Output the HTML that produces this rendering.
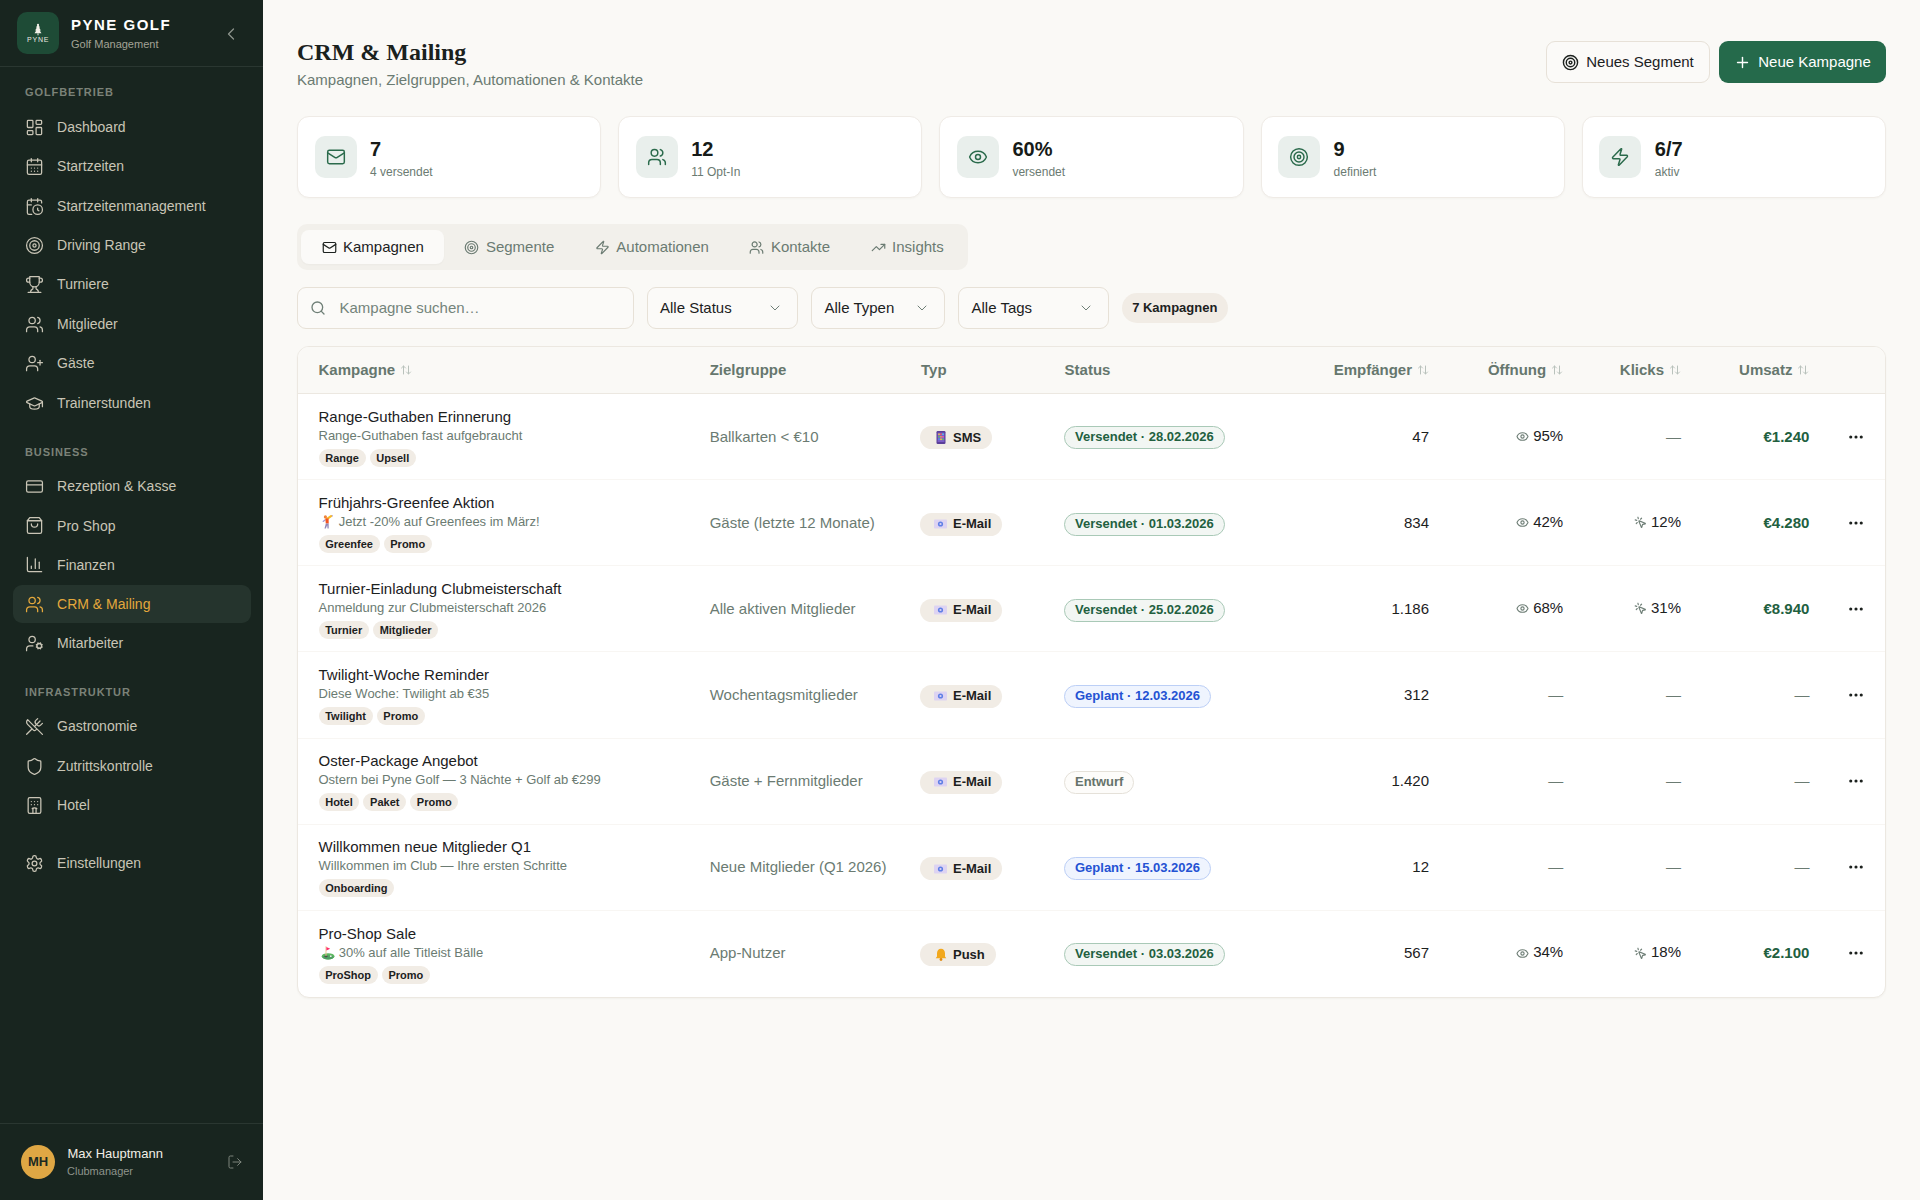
<!DOCTYPE html>
<html lang="de"><head><meta charset="utf-8"><title>CRM &amp; Mailing</title>
<style>
*{box-sizing:border-box;margin:0;padding:0}
html,body{width:1920px;height:1200px;overflow:hidden}
body{background:#faf9f6;font-family:"Liberation Sans",sans-serif;color:#1c211e;position:relative}
svg{display:block;flex:none}
#side{position:absolute;left:0;top:0;width:263px;height:1200px;background:#18251f}
.logo{position:absolute;left:17px;top:12px;width:42px;height:42px;border-radius:10px;background:#1e4b36}
.brand{position:absolute;left:71px;top:14.8px;font-size:15px;line-height:20px;font-weight:700;letter-spacing:1.5px;color:#ffffff;white-space:nowrap}
.brandsub{position:absolute;left:71px;top:37.2px;font-size:11px;line-height:14px;color:#a3a396;white-space:nowrap}
.collapse{position:absolute;left:220.6px;top:23.6px;width:20px;height:20px}
.sdiv{position:absolute;left:0;width:263px;height:1px;background:#2a3731}
.slabel{position:absolute;left:25px;font-size:11px;line-height:14px;font-weight:700;letter-spacing:0.9px;color:#7b8278;white-space:nowrap}
.nav{position:absolute;left:13px;width:238px;height:37.5px;border-radius:9px;display:flex;align-items:center;padding-left:11.5px;color:#c9c5b6;font-size:14px;line-height:20px;white-space:nowrap}
.nav svg{margin:0 13.1px 0 0.5px}
.nav.active{background:#25342d;color:#e4a83c}
.avatar{position:absolute;left:21px;top:1145px;width:34px;height:34px;border-radius:50%;background:#dfa744;color:#1b2a22;font-size:13px;font-weight:700;line-height:34px;text-align:center}
.uname{position:absolute;left:67.5px;top:1144.8px;font-size:13px;line-height:18px;font-weight:400;color:#f1eee6;white-space:nowrap}
.urole{position:absolute;left:67px;top:1164.2px;font-size:11px;line-height:14px;color:#8e948b;white-space:nowrap}
.logout{position:absolute;left:226.8px;top:1154.3px;width:16px;height:16px}
.h1{position:absolute;left:297px;top:36.9px;font-family:"Liberation Serif",serif;font-weight:700;font-size:24px;line-height:30px;color:#1a211d;white-space:nowrap}
.sub{position:absolute;left:297px;top:69.9px;font-size:15px;line-height:20px;color:#6b7b72;white-space:nowrap}
.btn{position:absolute;top:41px;height:42px;border-radius:9px;display:flex;align-items:center;justify-content:center;font-size:15px;line-height:20px;white-space:nowrap}
.btn svg{margin-right:7px}
.b1{left:1546px;width:164px;background:#fbfaf8;border:1px solid #e7e1d8;color:#1c211e}
.b2{left:1719px;width:167px;background:#256a4b;color:#ffffff}
.stats{position:absolute;left:297px;top:116px;width:1589px;height:82px;display:grid;grid-template-columns:repeat(5,1fr);gap:17px}
.stat{position:relative;background:#ffffff;border:1px solid #efebe6;border-radius:12px;box-shadow:0 1px 2px rgba(60,50,30,0.03)}
.sico{position:absolute;left:16.5px;top:19px;width:42px;height:42px;border-radius:10px;background:#e9efec;color:#2a6a4b;display:flex;align-items:center;justify-content:center}
.sval{position:absolute;left:72px;top:18.1px;font-size:20px;line-height:28px;font-weight:700;color:#161b18;white-space:nowrap}
.slab{position:absolute;left:72px;top:46.6px;font-size:12px;line-height:16px;color:#6b7b72;white-space:nowrap}
.tabs{position:absolute;left:297px;top:224px;height:46px;padding:6px 4px;border-radius:10px;background:#f2f0eb;display:flex}
.tab{height:34px;padding:0 20px;border-radius:8px;display:flex;align-items:center;font-size:15px;line-height:20px;color:#6b7b72;white-space:nowrap}
.tab svg{margin:0 6.5px 0 0.5px}
.tab.on{background:#fbfaf8;color:#1c211e;box-shadow:0 1px 2px rgba(0,0,0,0.03)}
.search{position:absolute;left:297px;top:287px;width:336.5px;height:41.5px;border:1px solid #e7e1d7;border-radius:9px;background:#fbfaf8;display:flex;align-items:center;padding-left:11.5px;font-size:15px;line-height:20px;color:#74847b;white-space:nowrap}
.search svg{margin-right:14px}
.sel{position:absolute;top:287px;height:41.5px;border:1px solid #e7e1d7;border-radius:9px;background:#fbfaf8;display:flex;align-items:center;padding-left:12.5px;font-size:15px;line-height:20px;color:#1c211e;white-space:nowrap}
.sel svg{position:absolute;right:13.5px;top:12px}
.count{position:absolute;left:1121.5px;top:292.7px;width:106.5px;height:30.2px;border-radius:15px;background:#f1ece5;font-size:13px;line-height:30.2px;font-weight:700;text-align:center;color:#1c211e;white-space:nowrap}
.table{position:absolute;left:297px;top:346px;width:1589px;height:652px;background:#ffffff;border:1px solid #ece8e1;border-radius:12px;overflow:hidden;box-shadow:0 1px 2px rgba(60,45,20,0.04)}
.thead{position:relative;height:47px;background:#faf9f6;border-bottom:1px solid #ece8e1}
.thead>div{position:absolute;top:13px;font-size:15px;line-height:20px;font-weight:700;color:#66776e;white-space:nowrap;display:flex;align-items:center}
.row{position:relative;height:86.14px;border-bottom:1px solid #f8f6f3}
.row:last-child{border-bottom:none}
.c1{left:20.5px}
.c2{left:411.7px}
.c3{left:622px}
.c4{left:766px}
.c5{right:456px}
.c6{right:321.8px}
.c7{right:204px}
.c8{right:75.6px}
.thead .c3{left:623px}
.thead .c4{left:766.6px}
.row>div{position:absolute;white-space:nowrap}
.row .c1{top:12.8px}
.rt{font-size:15px;line-height:20px;color:#1c211e}
.rs{font-size:13px;line-height:18px;color:#6b7b72}
.emo{display:inline-block;width:16.6px;height:16px;vertical-align:-3.5px}
.emo svg{margin:0.8px 0 0 1.2px}
.tags{display:flex;margin-top:4px}
.tag{height:18px;padding:0 6.7px;border-radius:9px;background:#f1ece5;font-size:11px;line-height:18px;font-weight:700;color:#1c211e;margin-right:4px}
.row .c2,.row .c5,.row .c6,.row .c7,.row .c8,.row .c3,.row .c4,.row .c9{top:0;height:85.14px;display:flex;align-items:center;font-size:15px;line-height:20px}
.row .c2{color:#6b7b72}
.row .c5{color:#1c211e}
.met{display:flex;align-items:center;color:#1c211e}
.met svg{margin-right:4px}
.met span{position:relative;top:-1px}
.dash{color:#6b7b72}
.ums{font-weight:700;color:#22603f}

.typ{display:flex;align-items:center;height:23px;position:relative;top:1.35px;padding:0 11px 0 12px;border-radius:12px;background:#f1ece5;font-size:13px;line-height:22px;font-weight:700;color:#1c211e}
.typ .em{margin-right:4px}
.typ .em{width:17px;display:flex;justify-content:center}
.st{display:inline-block;position:relative;top:1.35px;height:23px;padding:0 10px;border-radius:12px;font-size:13px;line-height:20px;font-weight:700;border:1px solid}
.st-v{background:#f2f6f3;border-color:#a9c9b7;color:#22603f}
.st-g{background:#eff4fe;border-color:#bccff6;color:#2452d3}
.st-e{background:#fdfcfa;border-color:#e5e1d9;color:#66736b}
.c9{right:20.5px}

</style></head><body>
<div id="side">
  <div class="logo"><svg width="42" height="42" viewBox="0 0 42 42"><g fill="#f1efe7"><circle cx="21" cy="12.9" r="1.1"/><path d="M21 12.4 L18.9 15.6 H19.9 L18.1 18.4 H19.3 L17.5 21.3 H24.5 L22.7 18.4 H23.9 L22.1 15.6 H23.1z"/><rect x="20.5" y="21.3" width="1" height="2"/></g><text x="21.2" y="30" text-anchor="middle" font-family="Liberation Sans" font-weight="400" font-size="7" letter-spacing="0.8" fill="#eae8e0">PYNE</text></svg></div>
  <div class="brand">PYNE GOLF</div>
  <div class="brandsub">Golf Management</div>
  <div class="collapse"><svg width="20" height="20" viewBox="0 0 24 24" fill="none" stroke="#8d948c" stroke-width="1.5" stroke-linecap="round" stroke-linejoin="round" style=""><path d="m15 18-6-6 6-6"/></svg></div>
  <div class="sdiv" style="top:66px"></div>
  <div class="slabel" style="top:85.20px">GOLFBETRIEB</div><div class="nav" style="top:108.40px"><svg width="19" height="19" viewBox="0 0 24 24" fill="none" stroke="currentColor" stroke-width="1.6" stroke-linecap="round" stroke-linejoin="round" style=""><rect x="3" y="3" width="7" height="9" rx="1"/><rect x="14" y="3" width="7" height="5" rx="1"/><rect x="14" y="12" width="7" height="9" rx="1"/><rect x="3" y="16" width="7" height="5" rx="1"/></svg><span>Dashboard</span></div><div class="nav" style="top:147.40px"><svg width="19" height="19" viewBox="0 0 24 24" fill="none" stroke="currentColor" stroke-width="1.6" stroke-linecap="round" stroke-linejoin="round" style=""><path d="M8 2v4"/><path d="M16 2v4"/><path d="M3 10h18"/><path d="M8 14h.01"/><path d="M12 14h.01"/><path d="M16 14h.01"/><path d="M8 18h.01"/><path d="M12 18h.01"/><path d="M16 18h.01"/><rect x="3" y="4" width="18" height="18" rx="2"/></svg><span>Startzeiten</span></div><div class="nav" style="top:187.40px"><svg width="19" height="19" viewBox="0 0 24 24" fill="none" stroke="currentColor" stroke-width="1.6" stroke-linecap="round" stroke-linejoin="round" style=""><path d="M21 7.5V6a2 2 0 0 0-2-2H5a2 2 0 0 0-2 2v14a2 2 0 0 0 2 2h3.5"/><path d="M16 2v4"/><path d="M8 2v4"/><path d="M3 10h5"/><path d="M17.5 17.5 16 16.3V14"/><circle cx="16" cy="16" r="6"/></svg><span>Startzeitenmanagement</span></div><div class="nav" style="top:226.40px"><svg width="19" height="19" viewBox="0 0 24 24" fill="none" stroke="currentColor" stroke-width="1.6" stroke-linecap="round" stroke-linejoin="round" style=""><circle cx="12" cy="12" r="10"/><circle cx="12" cy="12" r="6"/><circle cx="12" cy="12" r="2"/></svg><span>Driving Range</span></div><div class="nav" style="top:265.40px"><svg width="19" height="19" viewBox="0 0 24 24" fill="none" stroke="currentColor" stroke-width="1.6" stroke-linecap="round" stroke-linejoin="round" style=""><path d="M6 9H4.5a2.5 2.5 0 0 1 0-5H6"/><path d="M18 9h1.5a2.5 2.5 0 0 0 0-5H18"/><path d="M4 22h16"/><path d="M10 14.66V17c0 .55-.47.98-.97 1.21C7.85 18.75 7 20.24 7 22"/><path d="M14 14.66V17c0 .55.47.98.97 1.21C16.15 18.75 17 20.24 17 22"/><path d="M18 2H6v7a6 6 0 0 0 12 0V2Z"/></svg><span>Turniere</span></div><div class="nav" style="top:305.40px"><svg width="19" height="19" viewBox="0 0 24 24" fill="none" stroke="currentColor" stroke-width="1.6" stroke-linecap="round" stroke-linejoin="round" style=""><path d="M16 21v-2a4 4 0 0 0-4-4H6a4 4 0 0 0-4 4v2"/><path d="M22 21v-2a4 4 0 0 0-3-3.87"/><path d="M16 3.13a4 4 0 0 1 0 7.75"/><circle cx="9" cy="7" r="4"/></svg><span>Mitglieder</span></div><div class="nav" style="top:344.40px"><svg width="19" height="19" viewBox="0 0 24 24" fill="none" stroke="currentColor" stroke-width="1.6" stroke-linecap="round" stroke-linejoin="round" style=""><path d="M16 21v-2a4 4 0 0 0-4-4H6a4 4 0 0 0-4 4v2"/><path d="M19 8v6"/><path d="M22 11h-6"/><circle cx="9" cy="7" r="4"/></svg><span>Gäste</span></div><div class="nav" style="top:384.40px"><svg width="19" height="19" viewBox="0 0 24 24" fill="none" stroke="currentColor" stroke-width="1.6" stroke-linecap="round" stroke-linejoin="round" style=""><path d="M21.42 10.922a1 1 0 0 0-.019-1.838L12.83 5.18a2 2 0 0 0-1.66 0L2.6 9.08a1 1 0 0 0 0 1.832l8.57 3.908a2 2 0 0 0 1.66 0z"/><path d="M22 10v6"/><path d="M6 12.5V16a6 3 0 0 0 12 0v-3.5"/></svg><span>Trainerstunden</span></div><div class="slabel" style="top:444.70px">BUSINESS</div><div class="nav" style="top:467.40px"><svg width="19" height="19" viewBox="0 0 24 24" fill="none" stroke="currentColor" stroke-width="1.6" stroke-linecap="round" stroke-linejoin="round" style=""><rect x="2" y="5" width="20" height="14" rx="2"/><path d="M2 10h20"/></svg><span>Rezeption &amp; Kasse</span></div><div class="nav" style="top:506.90px"><svg width="19" height="19" viewBox="0 0 24 24" fill="none" stroke="currentColor" stroke-width="1.6" stroke-linecap="round" stroke-linejoin="round" style=""><path d="M6 2 3 6v14a2 2 0 0 0 2 2h14a2 2 0 0 0 2-2V6l-3-4Z"/><path d="M3 6h18"/><path d="M16 10a4 4 0 0 1-8 0"/></svg><span>Pro Shop</span></div><div class="nav" style="top:545.90px"><svg width="19" height="19" viewBox="0 0 24 24" fill="none" stroke="currentColor" stroke-width="1.6" stroke-linecap="round" stroke-linejoin="round" style=""><path d="M3 3v16a2 2 0 0 0 2 2h16"/><path d="M18 17V9"/><path d="M13 17V5"/><path d="M8 17v-3"/></svg><span>Finanzen</span></div><div class="nav active" style="top:585.40px"><svg width="19" height="19" viewBox="0 0 24 24" fill="none" stroke="currentColor" stroke-width="1.6" stroke-linecap="round" stroke-linejoin="round" style=""><path d="M16 21v-2a4 4 0 0 0-4-4H6a4 4 0 0 0-4 4v2"/><path d="M22 21v-2a4 4 0 0 0-3-3.87"/><path d="M16 3.13a4 4 0 0 1 0 7.75"/><circle cx="9" cy="7" r="4"/></svg><span>CRM &amp; Mailing</span></div><div class="nav" style="top:624.40px"><svg width="19" height="19" viewBox="0 0 24 24" fill="none" stroke="currentColor" stroke-width="1.6" stroke-linecap="round" stroke-linejoin="round" style=""><path d="M10 15H6a4 4 0 0 0-4 4v2"/><path d="m14.305 16.53.923-.382"/><path d="m15.228 13.852-.923-.383"/><path d="m16.852 12.228-.383-.923"/><path d="m16.852 17.772-.383.924"/><path d="m19.148 12.228.383-.923"/><path d="m19.53 18.696-.382-.924"/><path d="m20.772 13.852.924-.383"/><path d="m20.772 16.148.924.383"/><circle cx="18" cy="15" r="3"/><circle cx="9" cy="7" r="4"/></svg><span>Mitarbeiter</span></div><div class="slabel" style="top:685.20px">INFRASTRUKTUR</div><div class="nav" style="top:707.40px"><svg width="19" height="19" viewBox="0 0 24 24" fill="none" stroke="currentColor" stroke-width="1.6" stroke-linecap="round" stroke-linejoin="round" style=""><path d="m16 2-2.3 2.3a3 3 0 0 0 0 4.2l1.8 1.8a3 3 0 0 0 4.2 0L22 8"/><path d="M15 15 3.3 3.3a4.2 4.2 0 0 0 0 6l7.3 7.3c.7.7 2 .7 2.8 0L15 15Zm0 0 7 7"/><path d="m2.1 21.8 6.4-6.3"/><path d="m19 5-7 7"/></svg><span>Gastronomie</span></div><div class="nav" style="top:747.40px"><svg width="19" height="19" viewBox="0 0 24 24" fill="none" stroke="currentColor" stroke-width="1.6" stroke-linecap="round" stroke-linejoin="round" style=""><path d="M20 13c0 5-3.5 7.5-7.66 8.95a1 1 0 0 1-.67-.01C7.5 20.5 4 18 4 13V6a1 1 0 0 1 1-1c2 0 4.5-1.2 6.24-2.72a1.17 1.17 0 0 1 1.52 0C14.51 3.81 17 5 19 5a1 1 0 0 1 1 1z"/></svg><span>Zutrittskontrolle</span></div><div class="nav" style="top:786.40px"><svg width="19" height="19" viewBox="0 0 24 24" fill="none" stroke="currentColor" stroke-width="1.6" stroke-linecap="round" stroke-linejoin="round" style=""><path d="M10 22v-6.57"/><path d="M12 11h.01"/><path d="M12 7h.01"/><path d="M14 15.43V22"/><path d="M15 16a5 5 0 0 0-6 0"/><path d="M16 11h.01"/><path d="M16 7h.01"/><path d="M8 11h.01"/><path d="M8 7h.01"/><rect x="4" y="2" width="16" height="20" rx="2"/></svg><span>Hotel</span></div><div class="nav" style="top:844.40px"><svg width="19" height="19" viewBox="0 0 24 24" fill="none" stroke="currentColor" stroke-width="1.6" stroke-linecap="round" stroke-linejoin="round" style=""><path d="M12.22 2h-.44a2 2 0 0 0-2 2v.18a2 2 0 0 1-1 1.73l-.43.25a2 2 0 0 1-2 0l-.15-.08a2 2 0 0 0-2.73.73l-.22.38a2 2 0 0 0 .73 2.73l.15.1a2 2 0 0 1 1 1.72v.51a2 2 0 0 1-1 1.74l-.15.09a2 2 0 0 0-.73 2.73l.22.38a2 2 0 0 0 2.73.73l.15-.08a2 2 0 0 1 2 0l.43.25a2 2 0 0 1 1 1.73V20a2 2 0 0 0 2 2h.44a2 2 0 0 0 2-2v-.18a2 2 0 0 1 1-1.73l.43-.25a2 2 0 0 1 2 0l.15.08a2 2 0 0 0 2.73-.73l.22-.39a2 2 0 0 0-.73-2.73l-.15-.08a2 2 0 0 1-1-1.74v-.5a2 2 0 0 1 1-1.74l.15-.09a2 2 0 0 0 .73-2.73l-.22-.38a2 2 0 0 0-2.73-.73l-.15.08a2 2 0 0 1-2 0l-.43-.25a2 2 0 0 1-1-1.73V4a2 2 0 0 0-2-2z"/><circle cx="12" cy="12" r="3"/></svg><span>Einstellungen</span></div>
  <div class="sdiv" style="top:1123px"></div>
  <div class="avatar">MH</div>
  <div class="uname">Max Hauptmann</div>
  <div class="urole">Clubmanager</div>
  <div class="logout"><svg width="16" height="16" viewBox="0 0 24 24" fill="none" stroke="#7d857d" stroke-width="1.5" stroke-linecap="round" stroke-linejoin="round" style=""><path d="M9 21H5a2 2 0 0 1-2-2V5a2 2 0 0 1 2-2h4"/><path d="m16 17 5-5-5-5"/><path d="M21 12H9"/></svg></div>
</div>
<div id="main">
  <div class="h1">CRM &amp; Mailing</div>
  <div class="sub">Kampagnen, Zielgruppen, Automationen &amp; Kontakte</div>
  <div class="btn b1"><svg width="17" height="17" viewBox="0 0 24 24" fill="none" stroke="#1c211e" stroke-width="2" stroke-linecap="round" stroke-linejoin="round" style=""><circle cx="12" cy="12" r="10"/><circle cx="12" cy="12" r="6"/><circle cx="12" cy="12" r="2"/></svg><span>Neues Segment</span></div>
  <div class="btn b2"><svg width="17" height="17" viewBox="0 0 24 24" fill="none" stroke="#ffffff" stroke-width="2" stroke-linecap="round" stroke-linejoin="round" style=""><path d="M5 12h14"/><path d="M12 5v14"/></svg><span>Neue Kampagne</span></div>
  <div class="stats"><div class="stat"><div class="sico"><svg width="20" height="20" viewBox="0 0 24 24" fill="none" stroke="currentColor" stroke-width="1.75" stroke-linecap="round" stroke-linejoin="round" style=""><rect x="2" y="4" width="20" height="16" rx="2"/><path d="m22 7-8.97 5.7a1.94 1.94 0 0 1-2.06 0L2 7"/></svg></div><div class="stxt"><div class="sval">7</div><div class="slab">4 versendet</div></div></div><div class="stat"><div class="sico"><svg width="20" height="20" viewBox="0 0 24 24" fill="none" stroke="currentColor" stroke-width="1.75" stroke-linecap="round" stroke-linejoin="round" style=""><path d="M16 21v-2a4 4 0 0 0-4-4H6a4 4 0 0 0-4 4v2"/><path d="M22 21v-2a4 4 0 0 0-3-3.87"/><path d="M16 3.13a4 4 0 0 1 0 7.75"/><circle cx="9" cy="7" r="4"/></svg></div><div class="stxt"><div class="sval">12</div><div class="slab">11 Opt-In</div></div></div><div class="stat"><div class="sico"><svg width="20" height="20" viewBox="0 0 24 24" fill="none" stroke="currentColor" stroke-width="1.75" stroke-linecap="round" stroke-linejoin="round" style=""><path d="M2.062 12.348a1 1 0 0 1 0-.696 10.75 10.75 0 0 1 19.876 0 1 1 0 0 1 0 .696 10.75 10.75 0 0 1-19.876 0"/><circle cx="12" cy="12" r="3"/></svg></div><div class="stxt"><div class="sval">60%</div><div class="slab">versendet</div></div></div><div class="stat"><div class="sico"><svg width="20" height="20" viewBox="0 0 24 24" fill="none" stroke="currentColor" stroke-width="1.75" stroke-linecap="round" stroke-linejoin="round" style=""><circle cx="12" cy="12" r="10"/><circle cx="12" cy="12" r="6"/><circle cx="12" cy="12" r="2"/></svg></div><div class="stxt"><div class="sval">9</div><div class="slab">definiert</div></div></div><div class="stat"><div class="sico"><svg width="20" height="20" viewBox="0 0 24 24" fill="none" stroke="currentColor" stroke-width="1.75" stroke-linecap="round" stroke-linejoin="round" style=""><path d="M4 14a1 1 0 0 1-.78-1.63l9.9-10.2a.5.5 0 0 1 .86.46l-1.92 6.02A1 1 0 0 0 13 10h7a1 1 0 0 1 .78 1.63l-9.9 10.2a.5.5 0 0 1-.86-.46l1.92-6.02A1 1 0 0 0 11 14z"/></svg></div><div class="stxt"><div class="sval">6/7</div><div class="slab">aktiv</div></div></div></div>
  <div class="tabs"><div class="tab on"><svg width="15" height="15" viewBox="0 0 24 24" fill="none" stroke="currentColor" stroke-width="1.9" stroke-linecap="round" stroke-linejoin="round" style=""><rect x="2" y="4" width="20" height="16" rx="2"/><path d="m22 7-8.97 5.7a1.94 1.94 0 0 1-2.06 0L2 7"/></svg><span>Kampagnen</span></div><div class="tab"><svg width="15" height="15" viewBox="0 0 24 24" fill="none" stroke="currentColor" stroke-width="1.9" stroke-linecap="round" stroke-linejoin="round" style=""><circle cx="12" cy="12" r="10"/><circle cx="12" cy="12" r="6"/><circle cx="12" cy="12" r="2"/></svg><span>Segmente</span></div><div class="tab"><svg width="15" height="15" viewBox="0 0 24 24" fill="none" stroke="currentColor" stroke-width="1.9" stroke-linecap="round" stroke-linejoin="round" style=""><path d="M4 14a1 1 0 0 1-.78-1.63l9.9-10.2a.5.5 0 0 1 .86.46l-1.92 6.02A1 1 0 0 0 13 10h7a1 1 0 0 1 .78 1.63l-9.9 10.2a.5.5 0 0 1-.86-.46l1.92-6.02A1 1 0 0 0 11 14z"/></svg><span>Automationen</span></div><div class="tab"><svg width="15" height="15" viewBox="0 0 24 24" fill="none" stroke="currentColor" stroke-width="1.9" stroke-linecap="round" stroke-linejoin="round" style=""><path d="M16 21v-2a4 4 0 0 0-4-4H6a4 4 0 0 0-4 4v2"/><path d="M22 21v-2a4 4 0 0 0-3-3.87"/><path d="M16 3.13a4 4 0 0 1 0 7.75"/><circle cx="9" cy="7" r="4"/></svg><span>Kontakte</span></div><div class="tab"><svg width="15" height="15" viewBox="0 0 24 24" fill="none" stroke="currentColor" stroke-width="1.9" stroke-linecap="round" stroke-linejoin="round" style=""><path d="M22 7 13.5 15.5 8.5 10.5 2 17"/><path d="M16 7h6v6"/></svg><span>Insights</span></div></div>
  <div class="search"><svg width="16" height="16" viewBox="0 0 24 24" fill="none" stroke="#6f7f77" stroke-width="2" stroke-linecap="round" stroke-linejoin="round" style=""><circle cx="11" cy="11" r="8"/><path d="m21 21-4.3-4.3"/></svg><span>Kampagne suchen…</span></div>
  <div class="sel" style="left:646.5px;width:151px"><span>Alle Status</span><svg width="16" height="16" viewBox="0 0 24 24" fill="none" stroke="#6f7f77" stroke-width="1.5" stroke-linecap="round" stroke-linejoin="round" style=""><path d="m6 9 6 6 6-6"/></svg></div>
  <div class="sel" style="left:811px;width:133.5px"><span>Alle Typen</span><svg width="16" height="16" viewBox="0 0 24 24" fill="none" stroke="#6f7f77" stroke-width="1.5" stroke-linecap="round" stroke-linejoin="round" style=""><path d="m6 9 6 6 6-6"/></svg></div>
  <div class="sel" style="left:958px;width:150.5px"><span>Alle Tags</span><svg width="16" height="16" viewBox="0 0 24 24" fill="none" stroke="#6f7f77" stroke-width="1.5" stroke-linecap="round" stroke-linejoin="round" style=""><path d="m6 9 6 6 6-6"/></svg></div>
  <div class="count">7 Kampagnen</div>
  <div class="table">
    <div class="thead">
      <div class="c1">Kampagne<svg width="12" height="12" viewBox="0 0 24 24" fill="none" stroke="#b9c2bc" stroke-width="2" stroke-linecap="round" stroke-linejoin="round" style="margin-left:5px;vertical-align:-1px"><path d="m21 16-4 4-4-4"/><path d="M17 20V4"/><path d="m3 8 4-4 4 4"/><path d="M7 4v16"/></svg></div>
      <div class="c2">Zielgruppe</div>
      <div class="c3">Typ</div>
      <div class="c4">Status</div>
      <div class="c5">Empfänger<svg width="12" height="12" viewBox="0 0 24 24" fill="none" stroke="#b9c2bc" stroke-width="2" stroke-linecap="round" stroke-linejoin="round" style="margin-left:5px;vertical-align:-1px"><path d="m21 16-4 4-4-4"/><path d="M17 20V4"/><path d="m3 8 4-4 4 4"/><path d="M7 4v16"/></svg></div>
      <div class="c6">Öffnung<svg width="12" height="12" viewBox="0 0 24 24" fill="none" stroke="#b9c2bc" stroke-width="2" stroke-linecap="round" stroke-linejoin="round" style="margin-left:5px;vertical-align:-1px"><path d="m21 16-4 4-4-4"/><path d="M17 20V4"/><path d="m3 8 4-4 4 4"/><path d="M7 4v16"/></svg></div>
      <div class="c7">Klicks<svg width="12" height="12" viewBox="0 0 24 24" fill="none" stroke="#b9c2bc" stroke-width="2" stroke-linecap="round" stroke-linejoin="round" style="margin-left:5px;vertical-align:-1px"><path d="m21 16-4 4-4-4"/><path d="M17 20V4"/><path d="m3 8 4-4 4 4"/><path d="M7 4v16"/></svg></div>
      <div class="c8">Umsatz<svg width="12" height="12" viewBox="0 0 24 24" fill="none" stroke="#b9c2bc" stroke-width="2" stroke-linecap="round" stroke-linejoin="round" style="margin-left:5px;vertical-align:-1px"><path d="m21 16-4 4-4-4"/><path d="M17 20V4"/><path d="m3 8 4-4 4 4"/><path d="M7 4v16"/></svg></div>
    </div>
    <div class="row">
<div class="c1"><div class="rt">Range-Guthaben Erinnerung</div><div class="rs">Range-Guthaben fast aufgebraucht</div><div class="tags"><span class="tag">Range</span><span class="tag">Upsell</span></div></div>
<div class="c2">Ballkarten &lt; €10</div>
<div class="c3"><span class="typ"><span class="em"><svg width="10" height="13" viewBox="0 0 10 13"><rect x="0.5" y="0" width="9" height="13" rx="1.2" fill="#5b3f9a"/><rect x="1.6" y="1.6" width="6.8" height="9.4" fill="#7c5cc8"/><rect x="2.2" y="2.5" width="1.6" height="1.6" fill="#f5c542"/><rect x="4.2" y="2.5" width="1.6" height="1.6" fill="#ef5b5b"/><rect x="6.2" y="2.5" width="1.6" height="1.6" fill="#4ec3f0"/><rect x="2.2" y="5" width="1.6" height="1.6" fill="#58c46b"/><rect x="4.2" y="5" width="1.6" height="1.6" fill="#f59e42"/><rect x="6.2" y="5" width="1.6" height="1.6" fill="#e85bb0"/><rect x="2.2" y="7.5" width="1.6" height="1.6" fill="#4e8ef0"/><rect x="4.2" y="7.5" width="1.6" height="1.6" fill="#f5c542"/><rect x="6.2" y="7.5" width="1.6" height="1.6" fill="#58c46b"/></svg></span><span>SMS</span></span></div>
<div class="c4"><span class="st st-v">Versendet · 28.02.2026</span></div>
<div class="c5">47</div>
<div class="c6"><span class="met"><svg width="13" height="13" viewBox="0 0 24 24" fill="none" stroke="#6f7f77" stroke-width="2.1" stroke-linecap="round" stroke-linejoin="round" style=""><path d="M2.062 12.348a1 1 0 0 1 0-.696 10.75 10.75 0 0 1 19.876 0 1 1 0 0 1 0 .696 10.75 10.75 0 0 1-19.876 0"/><circle cx="12" cy="12" r="3"/></svg><span>95%</span></span></div>
<div class="c7"><span class="dash">—</span></div>
<div class="c8"><span class="ums">€1.240</span></div>
<div class="c9"><svg width="18" height="18" viewBox="0 0 24 24" fill="none" stroke="#1c211e" stroke-width="2.2" stroke-linecap="round" stroke-linejoin="round" style=""><circle cx="12" cy="12" r="1"/><circle cx="19" cy="12" r="1"/><circle cx="5" cy="12" r="1"/></svg></div>
</div><div class="row">
<div class="c1"><div class="rt">Frühjahrs-Greenfee Aktion</div><div class="rs"><span class="emo"><svg width="16.6" height="16" viewBox="0 0 16.6 16"><path d="M3.2 7.4 L5 5.9" stroke="#a99bd0" stroke-width="1.3" stroke-linecap="round"/><circle cx="12" cy="1.8" r="0.9" fill="#a99bd0"/><path d="M6.8 5.2 L11 2.2" stroke="#f7b928" stroke-width="2.2" stroke-linecap="round"/><circle cx="5.4" cy="2.9" r="1.6" fill="#f0843a"/><path d="M5.3 4.6 L8.6 4.4 L8.7 9.6 L5.8 9.6z" fill="#f4541f"/><path d="M5.8 9.5 L8.7 9.5 L8.7 14.6 L7.5 14.6 L7.2 11.2 L5.8 14.6 L4.5 14.6z" fill="#9488b8"/></svg></span> Jetzt -20% auf Greenfees im März!</div><div class="tags"><span class="tag">Greenfee</span><span class="tag">Promo</span></div></div>
<div class="c2">Gäste (letzte 12 Monate)</div>
<div class="c3"><span class="typ"><span class="em"><svg width="13" height="10" viewBox="0 0 13 10"><rect x="0" y="0.5" width="13" height="9" rx="1" fill="#ddd3f2"/><circle cx="6.5" cy="5" r="2.6" fill="#5f7fe6"/><circle cx="6.5" cy="5" r="1.1" fill="#ddd3f2"/></svg></span><span>E-Mail</span></span></div>
<div class="c4"><span class="st st-v">Versendet · 01.03.2026</span></div>
<div class="c5">834</div>
<div class="c6"><span class="met"><svg width="13" height="13" viewBox="0 0 24 24" fill="none" stroke="#6f7f77" stroke-width="2.1" stroke-linecap="round" stroke-linejoin="round" style=""><path d="M2.062 12.348a1 1 0 0 1 0-.696 10.75 10.75 0 0 1 19.876 0 1 1 0 0 1 0 .696 10.75 10.75 0 0 1-19.876 0"/><circle cx="12" cy="12" r="3"/></svg><span>42%</span></span></div>
<div class="c7"><span class="met"><svg width="13" height="13" viewBox="0 0 24 24" fill="none" stroke="#6f7f77" stroke-width="2.1" stroke-linecap="round" stroke-linejoin="round" style=""><path d="M14 4.1 12 6"/><path d="m5.1 8-2.9-.8"/><path d="m6 12-1.9 2"/><path d="M7.2 2.2 8 5.1"/><path d="M9.037 9.69a.498.498 0 0 1 .653-.653l11 4.5a.5.5 0 0 1-.074.949l-4.349 1.041a1 1 0 0 0-.74.739l-1.04 4.35a.5.5 0 0 1-.95.074z"/></svg><span>12%</span></span></div>
<div class="c8"><span class="ums">€4.280</span></div>
<div class="c9"><svg width="18" height="18" viewBox="0 0 24 24" fill="none" stroke="#1c211e" stroke-width="2.2" stroke-linecap="round" stroke-linejoin="round" style=""><circle cx="12" cy="12" r="1"/><circle cx="19" cy="12" r="1"/><circle cx="5" cy="12" r="1"/></svg></div>
</div><div class="row">
<div class="c1"><div class="rt">Turnier-Einladung Clubmeisterschaft</div><div class="rs">Anmeldung zur Clubmeisterschaft 2026</div><div class="tags"><span class="tag">Turnier</span><span class="tag">Mitglieder</span></div></div>
<div class="c2">Alle aktiven Mitglieder</div>
<div class="c3"><span class="typ"><span class="em"><svg width="13" height="10" viewBox="0 0 13 10"><rect x="0" y="0.5" width="13" height="9" rx="1" fill="#ddd3f2"/><circle cx="6.5" cy="5" r="2.6" fill="#5f7fe6"/><circle cx="6.5" cy="5" r="1.1" fill="#ddd3f2"/></svg></span><span>E-Mail</span></span></div>
<div class="c4"><span class="st st-v">Versendet · 25.02.2026</span></div>
<div class="c5">1.186</div>
<div class="c6"><span class="met"><svg width="13" height="13" viewBox="0 0 24 24" fill="none" stroke="#6f7f77" stroke-width="2.1" stroke-linecap="round" stroke-linejoin="round" style=""><path d="M2.062 12.348a1 1 0 0 1 0-.696 10.75 10.75 0 0 1 19.876 0 1 1 0 0 1 0 .696 10.75 10.75 0 0 1-19.876 0"/><circle cx="12" cy="12" r="3"/></svg><span>68%</span></span></div>
<div class="c7"><span class="met"><svg width="13" height="13" viewBox="0 0 24 24" fill="none" stroke="#6f7f77" stroke-width="2.1" stroke-linecap="round" stroke-linejoin="round" style=""><path d="M14 4.1 12 6"/><path d="m5.1 8-2.9-.8"/><path d="m6 12-1.9 2"/><path d="M7.2 2.2 8 5.1"/><path d="M9.037 9.69a.498.498 0 0 1 .653-.653l11 4.5a.5.5 0 0 1-.074.949l-4.349 1.041a1 1 0 0 0-.74.739l-1.04 4.35a.5.5 0 0 1-.95.074z"/></svg><span>31%</span></span></div>
<div class="c8"><span class="ums">€8.940</span></div>
<div class="c9"><svg width="18" height="18" viewBox="0 0 24 24" fill="none" stroke="#1c211e" stroke-width="2.2" stroke-linecap="round" stroke-linejoin="round" style=""><circle cx="12" cy="12" r="1"/><circle cx="19" cy="12" r="1"/><circle cx="5" cy="12" r="1"/></svg></div>
</div><div class="row">
<div class="c1"><div class="rt">Twilight-Woche Reminder</div><div class="rs">Diese Woche: Twilight ab €35</div><div class="tags"><span class="tag">Twilight</span><span class="tag">Promo</span></div></div>
<div class="c2">Wochentagsmitglieder</div>
<div class="c3"><span class="typ"><span class="em"><svg width="13" height="10" viewBox="0 0 13 10"><rect x="0" y="0.5" width="13" height="9" rx="1" fill="#ddd3f2"/><circle cx="6.5" cy="5" r="2.6" fill="#5f7fe6"/><circle cx="6.5" cy="5" r="1.1" fill="#ddd3f2"/></svg></span><span>E-Mail</span></span></div>
<div class="c4"><span class="st st-g">Geplant · 12.03.2026</span></div>
<div class="c5">312</div>
<div class="c6"><span class="dash">—</span></div>
<div class="c7"><span class="dash">—</span></div>
<div class="c8"><span class="dash">—</span></div>
<div class="c9"><svg width="18" height="18" viewBox="0 0 24 24" fill="none" stroke="#1c211e" stroke-width="2.2" stroke-linecap="round" stroke-linejoin="round" style=""><circle cx="12" cy="12" r="1"/><circle cx="19" cy="12" r="1"/><circle cx="5" cy="12" r="1"/></svg></div>
</div><div class="row">
<div class="c1"><div class="rt">Oster-Package Angebot</div><div class="rs">Ostern bei Pyne Golf — 3 Nächte + Golf ab €299</div><div class="tags"><span class="tag">Hotel</span><span class="tag">Paket</span><span class="tag">Promo</span></div></div>
<div class="c2">Gäste + Fernmitglieder</div>
<div class="c3"><span class="typ"><span class="em"><svg width="13" height="10" viewBox="0 0 13 10"><rect x="0" y="0.5" width="13" height="9" rx="1" fill="#ddd3f2"/><circle cx="6.5" cy="5" r="2.6" fill="#5f7fe6"/><circle cx="6.5" cy="5" r="1.1" fill="#ddd3f2"/></svg></span><span>E-Mail</span></span></div>
<div class="c4"><span class="st st-e">Entwurf</span></div>
<div class="c5">1.420</div>
<div class="c6"><span class="dash">—</span></div>
<div class="c7"><span class="dash">—</span></div>
<div class="c8"><span class="dash">—</span></div>
<div class="c9"><svg width="18" height="18" viewBox="0 0 24 24" fill="none" stroke="#1c211e" stroke-width="2.2" stroke-linecap="round" stroke-linejoin="round" style=""><circle cx="12" cy="12" r="1"/><circle cx="19" cy="12" r="1"/><circle cx="5" cy="12" r="1"/></svg></div>
</div><div class="row">
<div class="c1"><div class="rt">Willkommen neue Mitglieder Q1</div><div class="rs">Willkommen im Club — Ihre ersten Schritte</div><div class="tags"><span class="tag">Onboarding</span></div></div>
<div class="c2">Neue Mitglieder (Q1 2026)</div>
<div class="c3"><span class="typ"><span class="em"><svg width="13" height="10" viewBox="0 0 13 10"><rect x="0" y="0.5" width="13" height="9" rx="1" fill="#ddd3f2"/><circle cx="6.5" cy="5" r="2.6" fill="#5f7fe6"/><circle cx="6.5" cy="5" r="1.1" fill="#ddd3f2"/></svg></span><span>E-Mail</span></span></div>
<div class="c4"><span class="st st-g">Geplant · 15.03.2026</span></div>
<div class="c5">12</div>
<div class="c6"><span class="dash">—</span></div>
<div class="c7"><span class="dash">—</span></div>
<div class="c8"><span class="dash">—</span></div>
<div class="c9"><svg width="18" height="18" viewBox="0 0 24 24" fill="none" stroke="#1c211e" stroke-width="2.2" stroke-linecap="round" stroke-linejoin="round" style=""><circle cx="12" cy="12" r="1"/><circle cx="19" cy="12" r="1"/><circle cx="5" cy="12" r="1"/></svg></div>
</div><div class="row">
<div class="c1"><div class="rt">Pro-Shop Sale</div><div class="rs"><span class="emo"><svg width="16.6" height="16" viewBox="0 0 16.6 16"><ellipse cx="8.1" cy="11.3" rx="6.4" ry="3.1" fill="#5db860"/><ellipse cx="8.1" cy="12.3" rx="5.6" ry="2.1" fill="#4f9f62"/><ellipse cx="6" cy="11.4" rx="1.5" ry="0.8" fill="#33323a"/><circle cx="10.8" cy="11.2" r="0.9" fill="#e6efe6"/><path d="M6 1.2 V11.4" stroke="#f0bf8a" stroke-width="0.9"/><path d="M6.4 2 L10.2 3.8 L6.4 5.6z" fill="#ff2a68"/></svg></span> 30% auf alle Titleist Bälle</div><div class="tags"><span class="tag">ProShop</span><span class="tag">Promo</span></div></div>
<div class="c2">App-Nutzer</div>
<div class="c3"><span class="typ"><span class="em"><svg width="12" height="13" viewBox="0 0 12 13"><path d="M6 0.8c-2.4 0-4 1.9-4 4.4v3.2L0.7 10.3h10.6L10 8.4V5.2C10 2.7 8.4 0.8 6 0.8z" fill="#f2a81d"/><circle cx="6" cy="11.5" r="1.4" fill="#e08a10"/></svg></span><span>Push</span></span></div>
<div class="c4"><span class="st st-v">Versendet · 03.03.2026</span></div>
<div class="c5">567</div>
<div class="c6"><span class="met"><svg width="13" height="13" viewBox="0 0 24 24" fill="none" stroke="#6f7f77" stroke-width="2.1" stroke-linecap="round" stroke-linejoin="round" style=""><path d="M2.062 12.348a1 1 0 0 1 0-.696 10.75 10.75 0 0 1 19.876 0 1 1 0 0 1 0 .696 10.75 10.75 0 0 1-19.876 0"/><circle cx="12" cy="12" r="3"/></svg><span>34%</span></span></div>
<div class="c7"><span class="met"><svg width="13" height="13" viewBox="0 0 24 24" fill="none" stroke="#6f7f77" stroke-width="2.1" stroke-linecap="round" stroke-linejoin="round" style=""><path d="M14 4.1 12 6"/><path d="m5.1 8-2.9-.8"/><path d="m6 12-1.9 2"/><path d="M7.2 2.2 8 5.1"/><path d="M9.037 9.69a.498.498 0 0 1 .653-.653l11 4.5a.5.5 0 0 1-.074.949l-4.349 1.041a1 1 0 0 0-.74.739l-1.04 4.35a.5.5 0 0 1-.95.074z"/></svg><span>18%</span></span></div>
<div class="c8"><span class="ums">€2.100</span></div>
<div class="c9"><svg width="18" height="18" viewBox="0 0 24 24" fill="none" stroke="#1c211e" stroke-width="2.2" stroke-linecap="round" stroke-linejoin="round" style=""><circle cx="12" cy="12" r="1"/><circle cx="19" cy="12" r="1"/><circle cx="5" cy="12" r="1"/></svg></div>
</div>
  </div>
</div>
</body></html>
